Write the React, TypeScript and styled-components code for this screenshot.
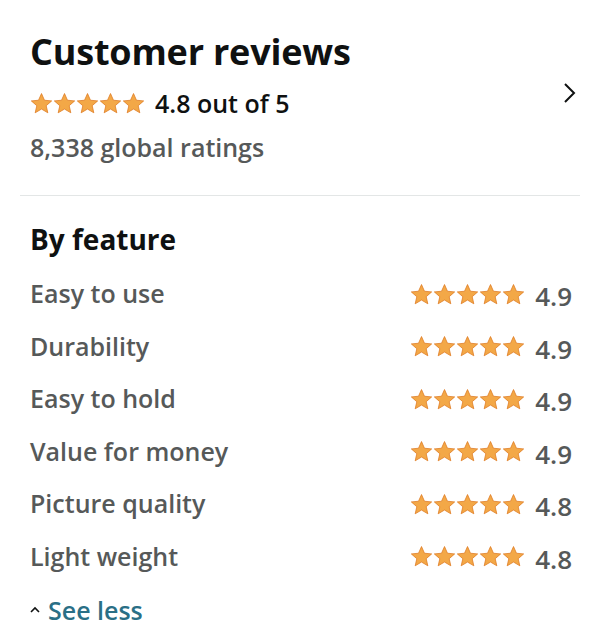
import React from "react";
import styled, { createGlobalStyle } from "styled-components";

const GlobalStyle = createGlobalStyle`
  body {
    margin: 0;
    background: #fff;
    font-family: "Open Sans", "Liberation Sans", sans-serif;
  }
`;

const Page = styled.div`
  width: 600px;
  height: 644px;
  padding: 0 20px;
  box-sizing: border-box;
  overflow: hidden;
`;

const Header = styled.div`
  display: flex;
  justify-content: space-between;
  align-items: flex-start;
  padding: 30px 10px 0 10px;
`;

const Title = styled.h1`
  margin: 0;
  font-size: 36px;
  font-weight: 700;
  color: #0f1111;
  line-height: 44px;
  letter-spacing: -0.2px;
`;

const RatingRow = styled.div`
  display: flex;
  align-items: center;
  gap: 10px;
  margin-top: 13px;
`;

const Score = styled.span`
  font-size: 25px;
  font-weight: 600;
  color: #0f1111;
  line-height: 32px;
`;

const Global = styled.div`
  font-size: 25px;
  font-weight: 600;
  color: #565959;
  line-height: 32px;
  margin-top: 12px;
`;

const Chevron = styled.div`
  margin-top: 52px;
  margin-right: -6px;
`;

const Divider = styled.hr`
  border: none;
  border-top: 1px solid #e3e6e6;
  margin: 32px 0 0;
`;

const Section = styled.div`
  padding: 0 10px;
`;

const SubTitle = styled.h2`
  margin: 25px 0 10px;
  font-size: 28px;
  font-weight: 700;
  color: #0f1111;
  line-height: 36px;
`;

const FeatureRow = styled.div`
  display: flex;
  align-items: center;
  justify-content: space-between;
  height: 52.5px;
`;

const Label = styled.span`
  font-size: 25px;
  font-weight: 600;
  color: #565959;
`;

const RightSide = styled.div`
  display: flex;
  align-items: center;
  gap: 10px;
  margin-right: -2px;
  padding-top: 2px;
`;

const Value = styled.span`
  font-size: 26px;
  font-weight: 600;
  color: #565959;
  margin-top: 4px;
`;

const StarsBox = styled.div`
  display: flex;
  gap: 0;
`;

const SeeLess = styled.a`
  display: flex;
  align-items: center;
  gap: 8px;
  margin-top: 12px;
  font-size: 25px;
  font-weight: 600;
  color: #2a6f86;
  text-decoration: none;
  line-height: 32px;
`;

const Star = ({ size }: { size: number }) => (
  <svg width={size} height={size} viewBox="0 0 24 24">
    <path
      d="M12 1.6l3.1 7 7.5.7-5.7 5 1.7 7.4L12 17.8l-6.6 3.9 1.7-7.4-5.7-5 7.5-.7z"
      fill="#f3a847"
      stroke="#de7921"
      strokeWidth="0.8"
      strokeLinejoin="round"
    />
  </svg>
);

const Stars = ({ size = 23 }: { size?: number }) => (
  <StarsBox>
    {[0, 1, 2, 3, 4].map((i) => (
      <Star key={i} size={size} />
    ))}
  </StarsBox>
);

const features = [
  { name: "Easy to use", value: "4.9" },
  { name: "Durability", value: "4.9" },
  { name: "Easy to hold", value: "4.9" },
  { name: "Value for money", value: "4.9" },
  { name: "Picture quality", value: "4.8" },
  { name: "Light weight", value: "4.8" },
];

export default function App() {
  return (
    <Page>
      <GlobalStyle />
      <Header>
        <div>
          <Title>Customer reviews</Title>
          <RatingRow>
            <Stars />
            <Score>4.8 out of 5</Score>
          </RatingRow>
          <Global>8,338 global ratings</Global>
        </div>
        <Chevron>
          <svg width="14" height="22" viewBox="0 0 14 22">
            <path d="M3 2l9 9-9 9" fill="none" stroke="#0f1111" strokeWidth="2" />
          </svg>
        </Chevron>
      </Header>
      <Divider />
      <Section>
        <SubTitle>By feature</SubTitle>
        {features.map((f) => (
          <FeatureRow key={f.name}>
            <Label>{f.name}</Label>
            <RightSide>
              <Stars />
              <Value>{f.value}</Value>
            </RightSide>
          </FeatureRow>
        ))}
        <SeeLess href="#">
          <svg width="10" height="8" viewBox="0 0 10 8">
            <path d="M1 6l4-4 4 4" fill="none" stroke="#0f1111" strokeWidth="1.6" />
          </svg>
          See less
        </SeeLess>
      </Section>
    </Page>
  );
}
